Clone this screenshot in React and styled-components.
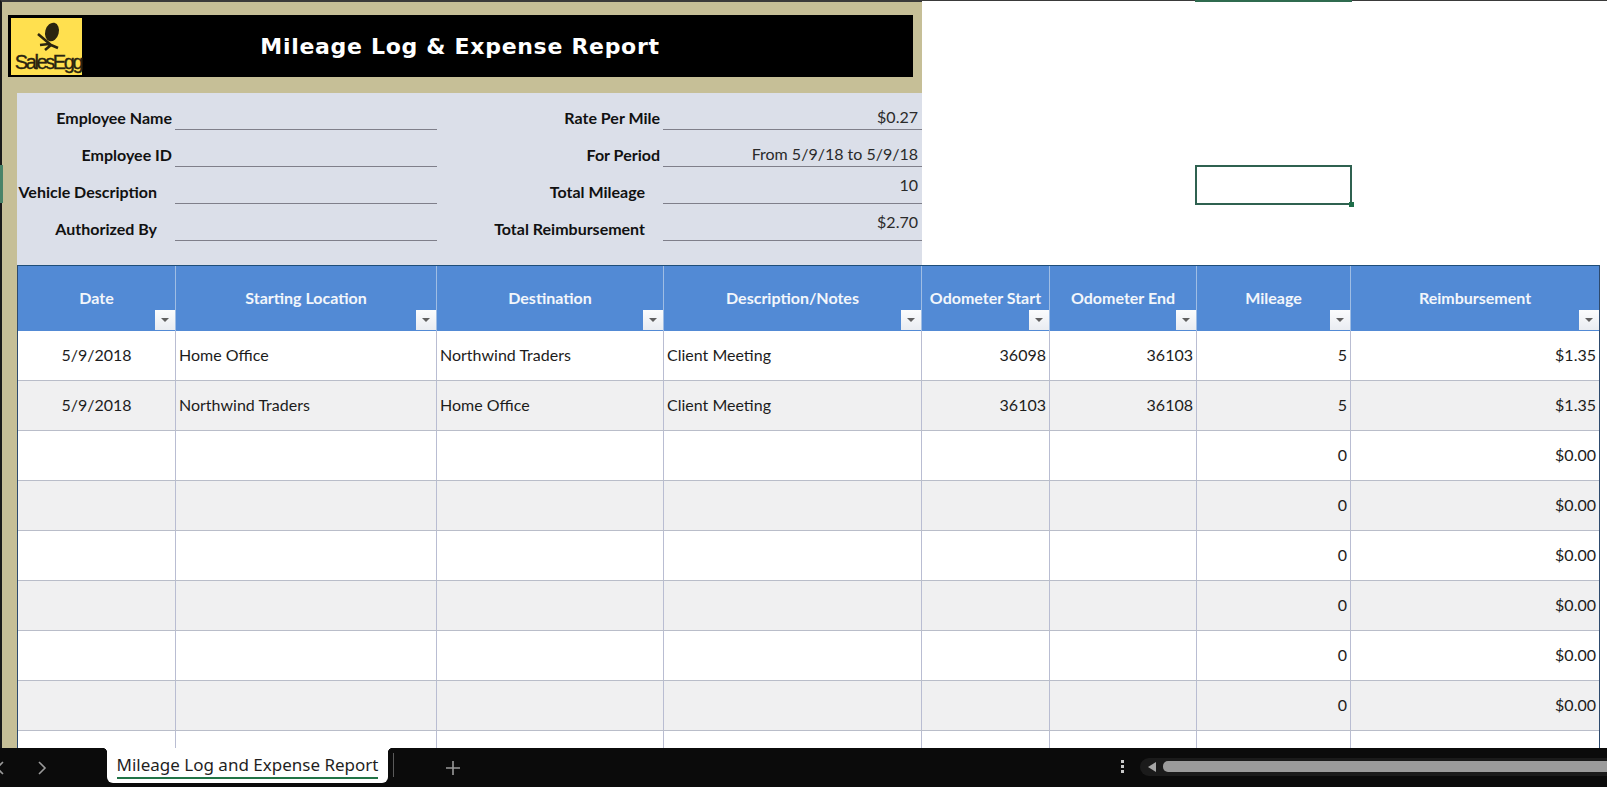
import React from 'react';
import styled, { createGlobalStyle } from 'styled-components';

const GlobalStyle = createGlobalStyle`
  html, body {
    margin: 0;
    height: 100%;
    overflow: hidden;
    background: #fff;
  }
`;

const columns = '158px 261px 227px 258px 128px 147px 154px 248px';

const Page = styled.div`
  width: 1607px;
  height: 787px;
  display: flex;
  flex-direction: column;
  overflow: hidden;
  font-family: Lato, 'Liberation Sans', sans-serif;
  color: #111;
`;

const Sheet = styled.div`
  flex: 1;
  min-height: 0;
  overflow: hidden;
  display: flex;
  flex-direction: column;
`;

const TopArea = styled.div`
  display: flex;
  height: 265px;
  flex: none;
`;

const FormBlock = styled.div`
  position: relative;
  width: 922px;
  flex: none;
  display: flex;
  flex-direction: column;
  background: #c6bf97;
  border-top: 2px solid #3a3a3a;
  border-left: 2px solid #1a1a1a;
  box-sizing: border-box;
`;

const RowMark = styled.span`
  position: absolute;
  left: -2px;
  top: 163px;
  width: 3px;
  height: 38px;
  background: #4a8468;
`;

const TitleBand = styled.div`
  height: 91px;
  flex: none;
  padding: 13px 9px 0 6px;
  box-sizing: border-box;
`;

const TitleBar = styled.div`
  height: 62px;
  background: #000;
  display: flex;
  align-items: center;
  padding: 0 3px;
`;

const Logo = styled.div`
  width: 71px;
  height: 57px;
  flex: none;
  background: #ffe04f;
  display: flex;
  flex-direction: column;
  align-items: center;
  justify-content: flex-end;
  padding-bottom: 3px;
  box-sizing: border-box;
`;

const LogoText = styled.span`
  font-family: 'Liberation Sans', Arial, sans-serif;
  font-size: 20px;
  line-height: 20px;
  letter-spacing: -2.4px;
  margin-left: 3px;
  color: #2a2410;
  -webkit-text-stroke: 0.35px #2a2410;
`;

const Title = styled.h1`
  margin: 0;
  width: 756px;
  text-align: center;
  font-family: 'DejaVu Sans', Verdana, sans-serif;
  font-size: 22px;
  font-weight: 700;
  letter-spacing: 0.7px;
  color: #fff;
`;

const FormPanel = styled.div`
  flex: 1;
  margin-left: 15px;
  background: #dbdfe9;
  display: grid;
  grid-template-columns: 158px 262px 226px 259px;
  grid-auto-rows: 37px;
`;

const FormLabel = styled.div`
  display: flex;
  align-items: flex-end;
  justify-content: flex-end;
  padding-right: ${(p) => p.$inset || 3}px;
  padding-bottom: 3px;
  box-sizing: border-box;
  font-size: 16px;
  font-weight: 700;
  white-space: nowrap;
`;

const FormValue = styled.div`
  border-bottom: 1px solid #7f7f8a;
  display: flex;
  align-items: flex-end;
  justify-content: flex-end;
  padding: 0 4px ${(p) => p.$lift || 3}px 0;
  font-size: 16px;
  color: #2a2a2a;
  white-space: nowrap;
`;

const SelectionArea = styled.div`
  flex: 1;
  display: grid;
  grid-template-columns: 273px 157px 1fr;
  grid-template-rows: 2px 163px 40px;
`;

const TopEdge = styled.div`
  grid-column: 2;
  grid-row: 1;
  background: #2f6b4f;
`;

const TopRule = styled.div`
  grid-column: ${(p) => p.$col};
  grid-row: 1;
  height: 1px;
  background: #3a3a3a;
`;

const SelectedCell = styled.div`
  grid-column: 2;
  grid-row: 3;
  position: relative;
  border: 2px solid #2f6150;
  box-sizing: border-box;

  &::after {
    content: '';
    position: absolute;
    right: -4px;
    bottom: -4px;
    width: 5px;
    height: 5px;
    background: #1f6e4a;
  }
`;

const LowerArea = styled.div`
  flex: 1;
  min-height: 0;
  display: flex;
`;

const Gutter = styled.div`
  width: 17px;
  flex: none;
  box-sizing: border-box;
  background: #c6bf97;
  border-left: 2px solid #1a1a1a;
`;

const Table = styled.div`
  flex: none;
  border-right: 1px solid #2d4a6e;
  border-left: 1px solid #2d4a6e;
`;

const HeaderRow = styled.div`
  display: grid;
  grid-template-columns: ${columns};
  height: 66px;
  background: #528ad5;
  border-top: 1px solid #1f4e79;
  box-sizing: border-box;
`;

const HeaderCell = styled.div`
  position: relative;
  display: flex;
  justify-content: center;
  padding-top: 22px;
  box-sizing: border-box;
  border-right: 1px solid #9fbde4;
  font-size: 16px;
  font-weight: 700;
  color: #f2f6fb;
  white-space: nowrap;

  &:last-child {
    border-right: none;
  }
`;

const FilterButton = styled.span`
  position: absolute;
  right: 0;
  bottom: 1px;
  width: 20px;
  height: 20px;
  background: linear-gradient(#fbfcfd, #e9ecf1);
  display: flex;
  align-items: center;
  justify-content: center;

  &::before {
    content: '';
    border-left: 4px solid transparent;
    border-right: 4px solid transparent;
    border-top: 4px solid #5f5f5f;
  }
`;

const Row = styled.div`
  display: grid;
  grid-template-columns: ${columns};
  height: 50px;
  box-sizing: border-box;
  border-bottom: 1px solid #b9bdc9;
  background: ${(p) => (p.$shade ? '#f0f0f1' : '#fff')};
`;

const Cell = styled.div`
  display: flex;
  align-items: center;
  justify-content: ${(p) => (p.$align === 'right' ? 'flex-end' : p.$align === 'center' ? 'center' : 'flex-start')};
  padding: 0 3px 3px;
  border-right: 1px solid #b9bdd2;
  font-size: 16px;
  color: #1c1c1c;
  white-space: nowrap;

  &:last-child {
    border-right: none;
  }
`;

const TabBar = styled.div`
  height: 39px;
  flex: none;
  background: #0b0b0b;
  display: flex;
  align-items: stretch;
`;

const NavArrows = styled.div`
  width: 107px;
  flex: none;
  display: flex;
  align-items: center;
  color: #9a9a9a;
  box-sizing: border-box;
  gap: 30px;
  margin-left: -6px;
`;

const SheetTab = styled.div`
  position: relative;
  width: 281px;
  height: 35px;
  margin-left: 6px;
  flex: none;
  background: #fff;
  border-radius: 0 0 6px 6px;
  display: flex;
  flex-direction: column;
  align-items: center;
  box-sizing: border-box;
  padding-top: 5px;
  font-family: 'Noto Sans', 'Open Sans', sans-serif;
  font-size: 17px;
  line-height: 24px;
  color: #1f1f1f;
  white-space: nowrap;

  &::before,
  &::after {
    content: '';
    position: absolute;
    top: 0;
    width: 5px;
    height: 5px;
  }

  &::before {
    left: -5px;
    background: radial-gradient(circle at 0 100%, #0b0b0b 5px, #fff 5.5px);
  }

  &::after {
    right: -5px;
    background: radial-gradient(circle at 100% 100%, #0b0b0b 5px, #fff 5.5px);
  }
`;

const TabUnderline = styled.span`
  display: inline-block;
  border-bottom: 2px solid #217346;
`;

const Separator = styled.div`
  width: 1px;
  height: 24px;
  margin: 5px 0 0 5px;
  background: #5a5a5a;
`;

const AddSheet = styled.div`
  width: 118px;
  flex: none;
  display: flex;
  align-items: center;
  justify-content: center;
  color: #9a9a9a;
  box-sizing: border-box;
`;

const Spacer = styled.div`
  flex: 1;
`;

const ScrollArea = styled.div`
  width: 503px;
  flex: none;
  display: flex;
  align-items: center;
  padding-bottom: 2px;
  box-sizing: border-box;
`;

const DotsColumn = styled.div`
  width: 36px;
  display: flex;
  flex-direction: column;
  align-items: center;
  gap: 2px;
`;

const Dot = styled.span`
  width: 3px;
  height: 3px;
  background: #c9c9c9;
`;

const ScrollTrack = styled.div`
  flex: 1;
  height: 18px;
  background: #1b1b1b;
  border-radius: 9px 0 0 9px;
  display: flex;
  align-items: center;
  padding-left: 8px;
  gap: 7px;
`;

const ScrollLeft = styled.span`
  border-top: 5px solid transparent;
  border-bottom: 5px solid transparent;
  border-right: 8px solid #a6a6a6;
`;

const ScrollThumb = styled.div`
  flex: 1;
  height: 11px;
  background: #9b9b9b;
  border-radius: 5px 0 0 5px;
`;

const EggMark = () => (
  <svg width="71" height="32" viewBox="0 0 71 32" aria-hidden="true">
    <ellipse cx="41" cy="12" rx="6.8" ry="9.5" fill="#2a2410" transform="rotate(15 41 12)" />
    <path d="M27 14 L40 25 M40 25 L34 30 M40 25 L47 28 M29 25 L38 24" stroke="#2a2410" strokeWidth="2.6" fill="none" />
  </svg>
);

const Chevron = ({ dir }) => (
  <svg width="12" height="16" viewBox="0 0 12 16" aria-hidden="true">
    <path d={dir === 'left' ? 'M9 2 L3 8 L9 14' : 'M3 2 L9 8 L3 14'} stroke="currentColor" strokeWidth="1.6" fill="none" />
  </svg>
);

const Plus = () => (
  <svg width="16" height="16" viewBox="0 0 16 16" aria-hidden="true">
    <path d="M8 1 V15 M1 8 H15" stroke="currentColor" strokeWidth="1.6" fill="none" />
  </svg>
);

const headers = ['Date', 'Starting Location', 'Destination', 'Description/Notes', 'Odometer Start', 'Odometer End', 'Mileage', 'Reimbursement'];

const rows = [
  ['5/9/2018', 'Home Office', 'Northwind Traders', 'Client Meeting', '36098', '36103', '5', '$1.35'],
  ['5/9/2018', 'Northwind Traders', 'Home Office', 'Client Meeting', '36103', '36108', '5', '$1.35'],
  ['', '', '', '', '', '', '0', '$0.00'],
  ['', '', '', '', '', '', '0', '$0.00'],
  ['', '', '', '', '', '', '0', '$0.00'],
  ['', '', '', '', '', '', '0', '$0.00'],
  ['', '', '', '', '', '', '0', '$0.00'],
  ['', '', '', '', '', '', '0', '$0.00'],
  ['', '', '', '', '', '', '', ''],
];

const cellAlign = ['center', 'left', 'left', 'left', 'right', 'right', 'right', 'right'];

export default function App() {
  return (
    <Page>
      <GlobalStyle />
      <Sheet>
        <TopArea>
          <FormBlock>
            <RowMark />
            <TitleBand>
              <TitleBar>
                <Logo>
                  <EggMark />
                  <LogoText>SalesEgg</LogoText>
                </Logo>
                <Title>Mileage Log &amp; Expense Report</Title>
              </TitleBar>
            </TitleBand>
            <FormPanel>
              <FormLabel>Employee Name</FormLabel>
              <FormValue />
              <FormLabel>Rate Per Mile</FormLabel>
              <FormValue>$0.27</FormValue>
              <FormLabel>Employee ID</FormLabel>
              <FormValue />
              <FormLabel>For Period</FormLabel>
              <FormValue>From 5/9/18 to 5/9/18</FormValue>
              <FormLabel $inset={18}>Vehicle Description</FormLabel>
              <FormValue />
              <FormLabel $inset={18}>Total Mileage</FormLabel>
              <FormValue $lift={9}>10</FormValue>
              <FormLabel $inset={18}>Authorized By</FormLabel>
              <FormValue />
              <FormLabel $inset={18}>Total Reimbursement</FormLabel>
              <FormValue $lift={9}>$2.70</FormValue>
            </FormPanel>
          </FormBlock>
          <SelectionArea>
            <TopRule $col={1} />
            <TopEdge />
            <TopRule $col={3} />
            <SelectedCell />
          </SelectionArea>
        </TopArea>
        <LowerArea>
          <Gutter />
          <Table>
            <HeaderRow>
              {headers.map((h) => (
                <HeaderCell key={h}>
                  {h}
                  <FilterButton />
                </HeaderCell>
              ))}
            </HeaderRow>
            {rows.map((row, i) => (
              <Row key={i} $shade={i % 2 === 1}>
                {row.map((value, j) => (
                  <Cell key={j} $align={cellAlign[j]}>{value}</Cell>
                ))}
              </Row>
            ))}
          </Table>
        </LowerArea>
      </Sheet>
      <TabBar>
        <NavArrows>
          <Chevron dir="left" />
          <Chevron dir="right" />
        </NavArrows>
        <SheetTab>
          <TabUnderline>Mileage Log and Expense Report</TabUnderline>
        </SheetTab>
        <Separator />
        <AddSheet>
          <Plus />
        </AddSheet>
        <Spacer />
        <ScrollArea>
          <DotsColumn>
            <Dot />
            <Dot />
            <Dot />
          </DotsColumn>
          <ScrollTrack>
            <ScrollLeft />
            <ScrollThumb />
          </ScrollTrack>
        </ScrollArea>
      </TabBar>
    </Page>
  );
}
